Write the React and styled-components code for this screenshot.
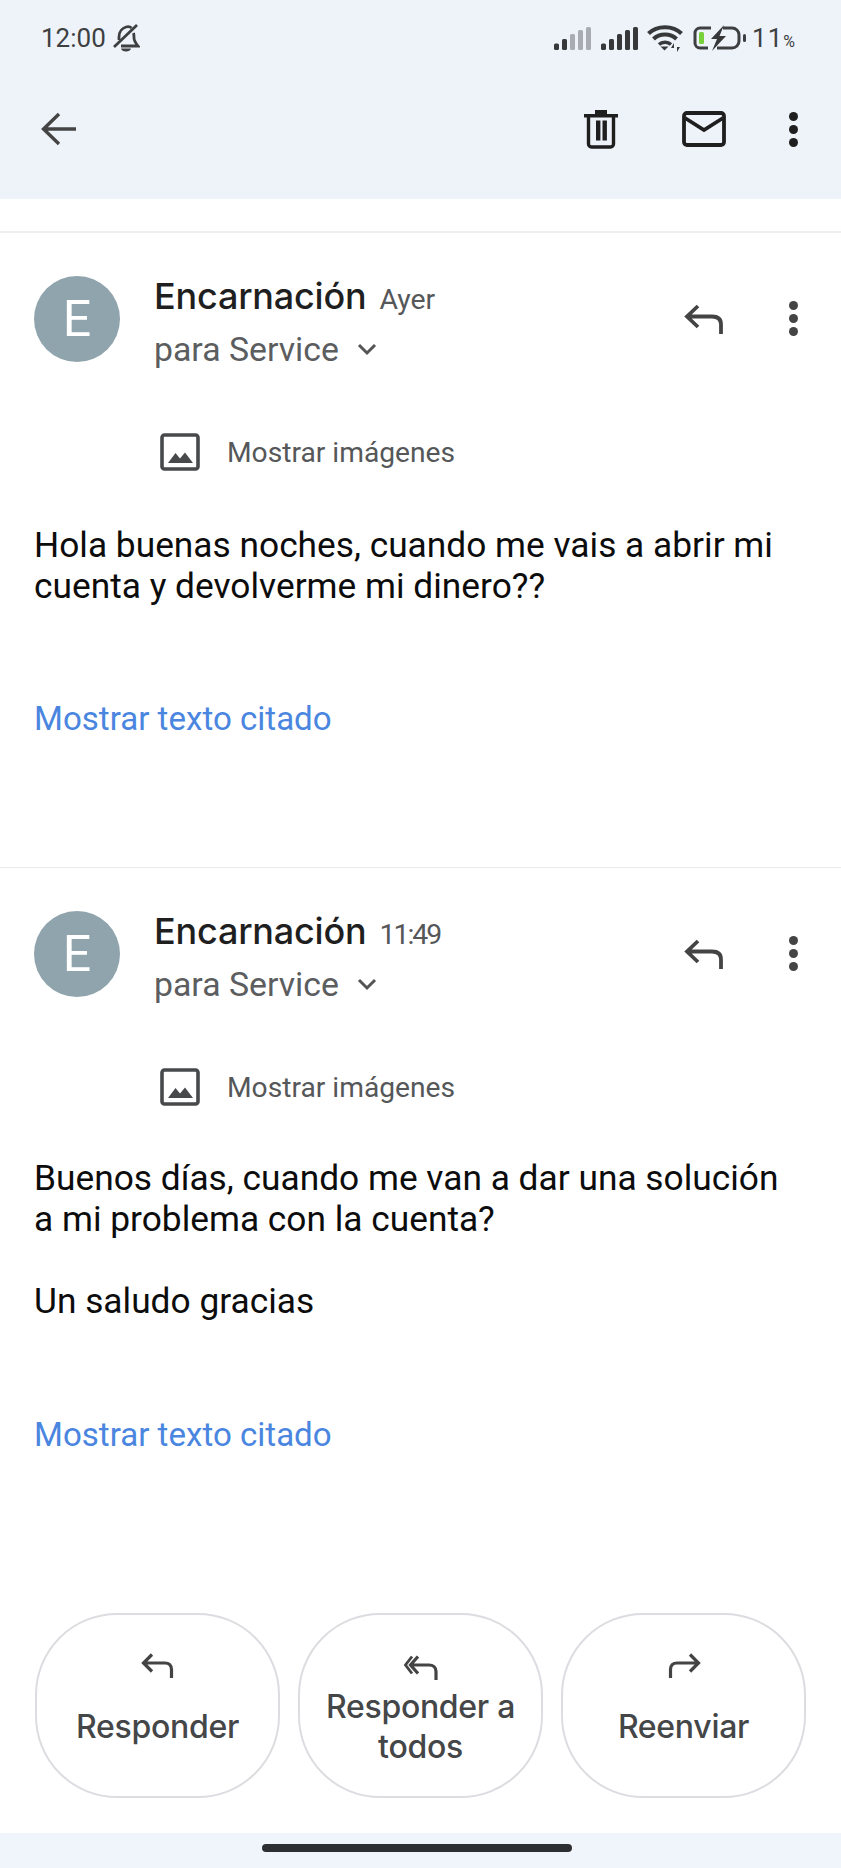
import React from "react";
import styled, { createGlobalStyle } from "styled-components";

const Global = createGlobalStyle`
  html, body { margin: 0; padding: 0; background: #fff; }
  body { font-family: Roboto, "Liberation Sans", sans-serif; }
  * { box-sizing: border-box; }
`;

const Page = styled.div`
  width: 841px;
  height: 1868px;
  display: flex;
  flex-direction: column;
  background: #fff;
  overflow: hidden;
`;
const Header = styled.header`
  height: 199px;
  flex: none;
  background: #eef3fa;
  display: flex;
  flex-direction: column;
`;
const StatusBar = styled.div`
  height: 76px;
  padding: 0 46px 0 41px;
  display: flex;
  align-items: center;
  justify-content: space-between;
`;
const StatusGroup = styled.div`
  display: flex;
  align-items: center;
  gap: ${(p) => p.$gap || 0}px;
`;
const Clock = styled.span`
  font-size: 26px;
  color: #3d3f41;
`;
const Battery = styled.span`
  font-size: 26px;
  letter-spacing: 1px;
  margin-left: -3px;
  color: #3d3f41;
  small { font-size: 16px; letter-spacing: 0; }
`;
const Toolbar = styled.div`
  height: 106px;
  padding: 0 43px 0 40px;
  display: flex;
  align-items: center;
  justify-content: space-between;
`;
const Spacer = styled.div`
  height: 34px;
  flex: none;
  border-bottom: 2px solid #eeeeee;
`;
const ToolGroup = styled.div`
  display: flex;
  align-items: center;
`;
const Message = styled.section`
  flex: none;
  height: ${(p) => p.$height}px;
  padding: 43px 34px 0;
  border-bottom: ${(p) => (p.$last ? "none" : "1px solid #eaeaea")};
`;
const MessageHead = styled.div`
  display: flex;
  align-items: flex-start;
`;
const Avatar = styled.div`
  width: 86px;
  height: 86px;
  border-radius: 50%;
  background: #90a4ae;
  color: #fff;
  font-size: 50px;
  font-weight: 400;
  display: flex;
  align-items: center;
  justify-content: center;
  flex: none;
`;
const Meta = styled.div`
  margin-left: 34px;
  flex: 1;
`;
const NameRow = styled.div`
  display: flex;
  align-items: baseline;
  height: 40px;
  margin-top: -2px;
`;
const Name = styled.span`
  font-family: Inter, sans-serif;
  font-size: 36px;
  font-weight: 500;
  letter-spacing: -0.2px;
  color: #1f1f1f;
`;
const When = styled.span`
  font-size: 28.4px;
  letter-spacing: ${(p) => (p.$tight ? "-2px" : "0")};
  color: #555759;
  margin-left: 13px;
`;
const ToRow = styled.div`
  display: flex;
  align-items: center;
  height: 40px;
  margin-top: 15px;
  font-size: 33.8px;
  color: #5b5d5f;
`;
const Actions = styled.div`
  display: flex;
  align-items: center;
  margin-top: 25px;
  margin-right: 9px;
`;
const ImageRow = styled.div`
  display: flex;
  align-items: center;
  margin: 63px 0 0 126px;
  height: 40px;
  font-size: 28.2px;
  color: #555759;
  gap: 27px;
`;
const Body = styled.div`
  margin-top: ${(p) => p.$top}px;
  font-size: 35.3px;
  line-height: 41px;
  color: #0c0c0c;
`;
const QuoteLink = styled.div`
  margin-top: ${(p) => p.$top}px;
  font-size: 33.1px;
  line-height: 41px;
  color: #4a86e0;
`;
const ButtonRow = styled.div`
  flex: 1;
  padding: 0 35px;
  display: grid;
  grid-template-columns: repeat(3, 245px);
  column-gap: 18px;
  align-items: start;
`;
const ActionButton = styled.button`
  height: 185px;
  border: 2px solid #dcdde0;
  border-radius: 82px;
  background: #fff;
  padding: ${(p) => p.$pt || 0}px 10px ${(p) => p.$pb || 0}px;
  display: flex;
  flex-direction: column;
  align-items: center;
  justify-content: center;
  font-family: Inter, sans-serif;
  font-size: 32px;
  font-weight: 500;
  line-height: 40px;
  letter-spacing: -0.3px;
  color: #444648;
  gap: ${(p) => p.$gap}px;
`;
const NavBar = styled.div`
  height: 35px;
  flex: none;
  background: #f0f4fb;
  display: flex;
  justify-content: center;
  padding: 11px 7px 0 0;
`;
const Pill = styled.div`
  width: 310px;
  height: 8px;
  border-radius: 4px;
  background: #2d2e31;
`;

const Icon = ({ w, h, children, mr, ml, ...rest }) => (
  <svg
    width={w}
    height={h}
    viewBox={`0 0 ${w} ${h}`}
    fill="none"
    style={mr || ml ? { marginRight: mr || 0, marginLeft: ml || 0 } : undefined}
    {...rest}
  >
    {children}
  </svg>
);

const BellOff = () => (
  <Icon w={28} h={30}>
    <path d="M2 24 25 2" stroke="#3d3f41" strokeWidth="2.8" />
    <path
      d="M7 17V14c0-5.500 3.500-9 7-10 2-.5 4-.5 5.500 1M21.500 10c.5 1.500.5 3 .5 5 0 3 2 5.500 4 8H9"
      stroke="#3d3f41"
      strokeWidth="2.8"
    />
    <path d="M9 25.500h10c-.5 4-9.500 4-10 0z" fill="#3d3f41" />
  </Icon>
);

const Signal = ({ dim }) => {
  const hs = [6.5, 11, 16, 20, 23];
  return (
    <Icon w={37} h={24}>
      {hs.map((h, i) => (
        <rect
          key={i}
          x={i * 8}
          y={24 - h}
          width={5}
          height={h}
          rx="1.500"
          fill={dim && i >= 2 ? "#a9adb1" : "#36383a"}
        />
      ))}
    </Icon>
  );
};

const Wifi = () => (
  <Icon w={36} h={28}>
    <path d="M1.500 9.500C10 1 26 1 34.500 9.500" stroke="#36383a" strokeWidth="4" />
    <path d="M6.500 15c6-6 17-6 23 0" stroke="#36383a" strokeWidth="4" />
    <path d="M12 20.500c3-3 9-3 12 0" stroke="#36383a" strokeWidth="3.400" />
    <path d="M13.500 22.500h8l-4 4z" fill="#36383a" />
    <path d="M27 28v-9l-3 5h3zM30 19v9l3-5h-3z" fill="#36383a" />
  </Icon>
);

const BatteryIcon = () => (
  <Icon w={53} h={26}>
    <path
      d="M18 3H7a5 5 0 0 0-5 5v10a5 5 0 0 0 5 5h8M30 3h9a7 7 0 0 1 7 7v6a7 7 0 0 1-7 7H24"
      stroke="#3d3f41"
      strokeWidth="3"
    />
    <rect x="6" y="7" width="5" height="12" rx="1.500" fill="#76d13b" />
    <path d="M31 0 18 14h6l-5 12 14-15h-6.500z" fill="#36383a" />
    <rect x="50" y="9" width="3" height="8" rx="1.500" fill="#3d3f41" />
  </Icon>
);

const BackArrow = () => (
  <Icon w={36} h={36}>
    <path d="M36 18H4M19 3 3.500 18 19 33" stroke="#444" strokeWidth="3.400" />
  </Icon>
);

const Trash = () => (
  <Icon w={34} h={40} mr={64}>
    <path d="M0 5h34v3.500H0zM11 1h12v4H11z" fill="#1f1f1f" />
    <path d="M4.500 7v28a3 3 0 0 0 3 3h19a3 3 0 0 0 3-3V7" stroke="#1f1f1f" strokeWidth="3.400" />
    <path d="M12 11.500h4.400v20H12zM18.500 11.500h4.400v20h-4.400z" fill="#1f1f1f" />
  </Icon>
);

const Mail = () => (
  <Icon w={44} h={36} mr={63}>
    <rect x="2" y="2" width="40" height="32" rx="3" stroke="#1f1f1f" strokeWidth="3.800" />
    <path d="M3 7 22 19 41 7" stroke="#1f1f1f" strokeWidth="3.800" />
  </Icon>
);

const Kebab = ({ color, r, step }) => (
  <Icon w={r * 2} h={step * 2 + r * 2}>
    {[0, 1, 2].map((i) => (
      <circle key={i} cx={r} cy={r + step * i} r={r} fill={color} />
    ))}
  </Icon>
);

const ReplyBig = () => (
  <Icon w={40} h={30} mr={65}>
    <path d="M14 2 3 12.500 14 23M3 12.500H28c6 0 9 3 9 8V30" stroke="#444" strokeWidth="3.800" />
  </Icon>
);

const Chevron = () => (
  <Icon w={20} h={13} ml={18}>
    <path d="M2 2 10 10 18 2" stroke="#555" strokeWidth="3" />
  </Icon>
);

const ImageIcon = () => (
  <Icon w={40} h={38}>
    <rect x="2" y="2" width="36" height="34" rx="2.500" stroke="#48494b" strokeWidth="3.600" />
    <path d="M8 30 15.500 20 20 25.500 25 19.500 33 30z" fill="#48494b" />
  </Icon>
);

const MiniReply = () => (
  <Icon w={34} h={26}>
    <path d="M11 1.500 2.500 10 11 18.500M3 10H24c4 0 6.500 2.500 6.500 6.500V25" stroke="#444" strokeWidth="3.200" />
  </Icon>
);
const MiniReplyAll = () => (
  <Icon w={36} h={26}>
    <path d="M9 1.500 2.500 10 9 18.500" stroke="#444" strokeWidth="2.800" />
    <path d="M15 1.500 7.500 10 15 18.500M8 10H26c4 0 7 2.500 7 6.500V25" stroke="#444" strokeWidth="3.200" />
  </Icon>
);
const MiniForward = () => (
  <Icon w={34} h={26}>
    <path d="M23 1.500 31.500 10 23 18.500M31 10H10c-4 0-6.500 2.500-6.500 6.500V25" stroke="#444" strokeWidth="3.200" />
  </Icon>
);

const messages = [
  {
    when: "Ayer",
    height: 635,
    bodyTop: 53,
    lines: ["Hola buenas noches, cuando me vais a abrir mi", "cuenta y devolverme mi dinero??"],
    linkTop: 91,
  },
  {
    when: "11:49",
    tight: true,
    height: 745,
    bodyTop: 51,
    last: true,
    lines: ["Buenos días, cuando me van a dar una solución", "a mi problema con la cuenta?", "\u00a0", "Un saludo gracias"],
    linkTop: 92,
  },
];

const MessageCard = ({ m }) => (
  <Message $height={m.height} $last={m.last}>
    <MessageHead>
      <Avatar>E</Avatar>
      <Meta>
        <NameRow>
          <Name>Encarnación</Name>
          <When $tight={m.tight}>{m.when}</When>
        </NameRow>
        <ToRow>
          para Service
          <Chevron />
        </ToRow>
      </Meta>
      <Actions>
        <ReplyBig />
        <Kebab color="#444" r={4.5} step={13} />
      </Actions>
    </MessageHead>
    <ImageRow>
      <ImageIcon />
      Mostrar imágenes
    </ImageRow>
    <Body $top={m.bodyTop}>
      {m.lines.map((l, i) => (
        <div key={i}>{l}</div>
      ))}
    </Body>
    <QuoteLink $top={m.linkTop}>Mostrar texto citado</QuoteLink>
  </Message>
);

export default function App() {
  return (
    <Page>
      <Global />
      <Header>
        <StatusBar>
          <StatusGroup $gap={6}>
            <Clock>12:00</Clock>
            <BellOff />
          </StatusGroup>
          <StatusGroup $gap={9.5}>
            <Signal dim />
            <Signal />
            <Wifi />
            <BatteryIcon />
            <Battery>
              11<small>%</small>
            </Battery>
          </StatusGroup>
        </StatusBar>
        <Toolbar>
          <BackArrow />
          <ToolGroup>
            <Trash />
            <Mail />
            <Kebab color="#1f1f1f" r={4.5} step={13} />
          </ToolGroup>
        </Toolbar>
      </Header>
      <Spacer />
      {messages.map((m) => (
        <MessageCard key={m.when} m={m} />
      ))}
      <ButtonRow>
        <ActionButton $gap={28} $pb={12}>
          <MiniReply />
          Responder
        </ActionButton>
        <ActionButton $gap={6} $pt={10}>
          <MiniReplyAll />
          Responder a todos
        </ActionButton>
        <ActionButton $gap={28} $pb={12}>
          <MiniForward />
          Reenviar
        </ActionButton>
      </ButtonRow>
      <NavBar>
        <Pill />
      </NavBar>
    </Page>
  );
}
